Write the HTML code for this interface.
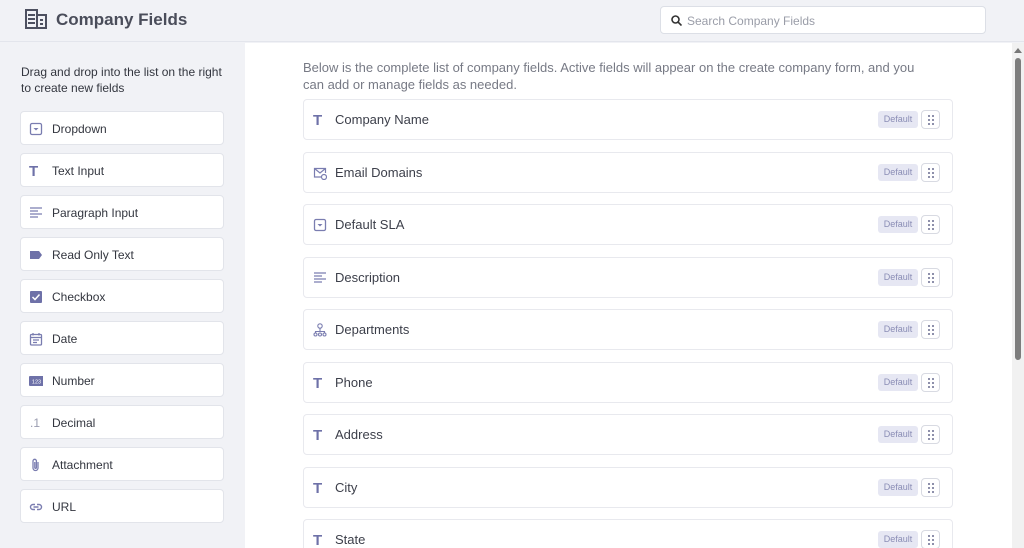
<!DOCTYPE html>
<html><head><style>
*{box-sizing:border-box;margin:0;padding:0}
html,body{width:1024px;height:548px;overflow:hidden}
body{font-family:"Liberation Sans",sans-serif;background:#f1f2f6;position:relative;color:#3c3f4a}
.hdr{position:absolute;left:0;top:0;width:1024px;height:42px;background:#f1f2f6;border-bottom:1px solid #e3e5ec}
.title{position:absolute;left:56px;top:10px;font-size:17px;font-weight:bold;color:#4a4d5a}
.search{position:absolute;left:660px;top:6px;width:326px;height:28px;background:#fff;border:1px solid #dcdfe6;border-radius:4px;font-size:12px;color:#9a9da8;padding:7px 0 0 26px}
.side{position:absolute;left:0;top:43px;width:244px;height:505px;background:#f1f2f6}
.side p{position:absolute;left:21px;top:21px;font-size:12px;line-height:16px;color:#33363f}
.it{position:absolute;left:20px;width:204px;height:34px;background:#fff;border:1px solid #e2e4ea;border-radius:4px;font-size:12px;color:#33363f;padding:10px 0 0 31px}
.ic{position:absolute;left:8px;top:10px;width:14px;height:14px}
.T{position:absolute;left:8px;top:9px;font-size:15px;font-weight:bold;color:#6e71a8}
.row .T{left:9px;top:12px}
.main{position:absolute;left:245px;top:43px;width:767px;height:505px;background:#fff}
.intro{position:absolute;left:303px;top:59px;font-size:13px;line-height:17px;color:#777a85;width:612px}
.row{position:absolute;left:303px;width:650px;height:41px;background:#fff;border:1px solid #e8e9ee;border-radius:4px;font-size:13px;color:#3c3f4a;padding:12px 0 0 31px}
.row .ic{left:9px;top:13px}
.def{position:absolute;right:34px;top:11px;width:40px;height:17px;background:#e6e7f3;border-radius:3px;font-size:9px;color:#8a8db5;text-align:center;line-height:17px}
.drag{position:absolute;right:12px;top:10px;width:19px;height:19px;border:1px solid #d8dae2;border-radius:4px}
.drag i{position:absolute;width:2px;height:2px;background:#6a6d90;border-radius:1px}
.sb{position:absolute;left:1012px;top:43px;width:12px;height:505px;background:#f1f1f1}
.th{position:absolute;left:1015px;top:58px;width:6px;height:302px;background:#7d7d7d;border-radius:3px}
</style></head><body>
<div class="hdr">
<svg style="position:absolute;left:25px;top:9px" width="22" height="20" viewBox="0 0 22 20" fill="none" stroke="#4d5060" stroke-width="2"><rect x="1" y="1" width="11" height="18"/><rect x="12" y="6" width="9" height="13"/><path d="M3 6h7M3 10h7M3 14h7M15 11h3M15 15h3"/></svg>
<div class="title">Company Fields</div>
<div class="search"><svg style="position:absolute;left:10px;top:8px" width="11" height="11" viewBox="0 0 11 11" fill="none" stroke="#333" stroke-width="1.6"><circle cx="4.5" cy="4.5" r="3.5"/><path d="M7 7l3.5 3.5"/></svg>Search Company Fields</div>
</div>
<div class="side"><p>Drag and drop into the list on the right<br>to create new fields</p></div>
<div class="it" style="top:111px"><svg class="ic" viewBox="0 0 14 14"><rect x="1.5" y="1.5" width="11" height="11" rx="1.5" fill="none" stroke="#7a7db0" stroke-width="1.3"/><path d="M4.5 6h5L7 8.5z" fill="#7a7db0"/></svg>Dropdown</div>
<div class="it" style="top:153px"><span class="T">T</span>Text Input</div>
<div class="it" style="top:195px"><svg class="ic" viewBox="0 0 14 14" stroke="#7a7db0" stroke-width="1.3"><path d="M1 2h12M1 5h8M1 8h12M1 11h8"/></svg>Paragraph Input</div>
<div class="it" style="top:237px"><svg class="ic" viewBox="0 0 14 14"><path d="M1 3h9l3 4-3 4H1z" fill="#6e71a8"/></svg>Read Only Text</div>
<div class="it" style="top:279px"><svg class="ic" viewBox="0 0 14 14"><rect x="1" y="1" width="12" height="12" rx="1" fill="#6e71a8"/><path d="M3.5 7l2.5 2.5 4.5-5" fill="none" stroke="#fff" stroke-width="1.5"/></svg>Checkbox</div>
<div class="it" style="top:321px"><svg class="ic" viewBox="0 0 14 14" fill="none" stroke="#7a7db0" stroke-width="1.3"><rect x="1.5" y="2.5" width="11" height="10.5" rx="1"/><path d="M1.5 5.5h11M4 1v2.5M10 1v2.5M4 8h6M4 10.5h4"/></svg>Date</div>
<div class="it" style="top:363px"><svg class="ic" viewBox="0 0 14 14"><rect x="0" y="2" width="15" height="10" rx="1" fill="#6e71a8"/><text x="7.5" y="9.5" font-size="5.5" fill="#fff" text-anchor="middle" font-family="Liberation Sans">123</text></svg>Number</div>
<div class="it" style="top:405px"><span style="position:absolute;left:9px;top:10px;color:#9a9cb0;font-size:12px">.1</span>Decimal</div>
<div class="it" style="top:447px"><svg class="ic" viewBox="0 0 14 14" fill="none" stroke="#7a7db0" stroke-width="1.3"><path d="M9 4v6a2.5 2.5 0 0 1-5 0V3a1.7 1.7 0 0 1 3.4 0v6.5a.8.8 0 0 1-1.6 0V4"/></svg>Attachment</div>
<div class="it" style="top:489px"><svg class="ic" viewBox="0 0 14 14" fill="none" stroke="#7a7db0" stroke-width="1.4"><path d="M6 4.5H4a2.5 2.5 0 0 0 0 5h2M8 4.5h2a2.5 2.5 0 0 1 0 5H8M4.5 7h5"/></svg>URL</div>
<div class="main"></div>
<div class="intro">Below is the complete list of company fields. Active fields will appear on the create company form, and you can add or manage fields as needed.</div>
<div class="row" style="top:99px"><span class="T">T</span>Company Name<span class="def">Default</span><span class="drag"><i style="left:6px;top:4px"></i><i style="left:10px;top:4px"></i><i style="left:6px;top:8px"></i><i style="left:10px;top:8px"></i><i style="left:6px;top:12px"></i><i style="left:10px;top:12px"></i></span></div>
<div class="row" style="top:152px"><svg class="ic" viewBox="0 0 14 14" fill="none" stroke="#7a7db0" stroke-width="1.2"><path d="M8 11H1.5V2.5h11V7M1.5 2.5l5.5 4.5 5.5-4.5"/><circle cx="11" cy="11" r="2.5"/></svg>Email Domains<span class="def">Default</span><span class="drag"><i style="left:6px;top:4px"></i><i style="left:10px;top:4px"></i><i style="left:6px;top:8px"></i><i style="left:10px;top:8px"></i><i style="left:6px;top:12px"></i><i style="left:10px;top:12px"></i></span></div>
<div class="row" style="top:204px"><svg class="ic" viewBox="0 0 14 14"><rect x="1.5" y="1.5" width="11" height="11" rx="1.5" fill="none" stroke="#7a7db0" stroke-width="1.3"/><path d="M4.5 6h5L7 8.5z" fill="#7a7db0"/></svg>Default SLA<span class="def">Default</span><span class="drag"><i style="left:6px;top:4px"></i><i style="left:10px;top:4px"></i><i style="left:6px;top:8px"></i><i style="left:10px;top:8px"></i><i style="left:6px;top:12px"></i><i style="left:10px;top:12px"></i></span></div>
<div class="row" style="top:257px"><svg class="ic" viewBox="0 0 14 14" stroke="#7a7db0" stroke-width="1.3"><path d="M1 2h12M1 5h8M1 8h12M1 11h8"/></svg>Description<span class="def">Default</span><span class="drag"><i style="left:6px;top:4px"></i><i style="left:10px;top:4px"></i><i style="left:6px;top:8px"></i><i style="left:10px;top:8px"></i><i style="left:6px;top:12px"></i><i style="left:10px;top:12px"></i></span></div>
<div class="row" style="top:309px"><svg class="ic" viewBox="0 0 14 14" fill="none" stroke="#7a7db0" stroke-width="1.1"><circle cx="7" cy="3" r="2.2"/><path d="M7 5.5v3M2.5 10V8.5h9V10"/><circle cx="2.5" cy="11.5" r="1.5"/><circle cx="7" cy="11.5" r="1.5"/><circle cx="11.5" cy="11.5" r="1.5"/></svg>Departments<span class="def">Default</span><span class="drag"><i style="left:6px;top:4px"></i><i style="left:10px;top:4px"></i><i style="left:6px;top:8px"></i><i style="left:10px;top:8px"></i><i style="left:6px;top:12px"></i><i style="left:10px;top:12px"></i></span></div>
<div class="row" style="top:362px"><span class="T">T</span>Phone<span class="def">Default</span><span class="drag"><i style="left:6px;top:4px"></i><i style="left:10px;top:4px"></i><i style="left:6px;top:8px"></i><i style="left:10px;top:8px"></i><i style="left:6px;top:12px"></i><i style="left:10px;top:12px"></i></span></div>
<div class="row" style="top:414px"><span class="T">T</span>Address<span class="def">Default</span><span class="drag"><i style="left:6px;top:4px"></i><i style="left:10px;top:4px"></i><i style="left:6px;top:8px"></i><i style="left:10px;top:8px"></i><i style="left:6px;top:12px"></i><i style="left:10px;top:12px"></i></span></div>
<div class="row" style="top:467px"><span class="T">T</span>City<span class="def">Default</span><span class="drag"><i style="left:6px;top:4px"></i><i style="left:10px;top:4px"></i><i style="left:6px;top:8px"></i><i style="left:10px;top:8px"></i><i style="left:6px;top:12px"></i><i style="left:10px;top:12px"></i></span></div>
<div class="row" style="top:519px"><span class="T">T</span>State<span class="def">Default</span><span class="drag"><i style="left:6px;top:4px"></i><i style="left:10px;top:4px"></i><i style="left:6px;top:8px"></i><i style="left:10px;top:8px"></i><i style="left:6px;top:12px"></i><i style="left:10px;top:12px"></i></span></div>
<div class="sb"></div>
<svg style="position:absolute;left:1014px;top:47px" width="8" height="6"><path d="M0 6L4 1 8 6z" fill="#777"/></svg>
<div class="th"></div>
</body></html>
